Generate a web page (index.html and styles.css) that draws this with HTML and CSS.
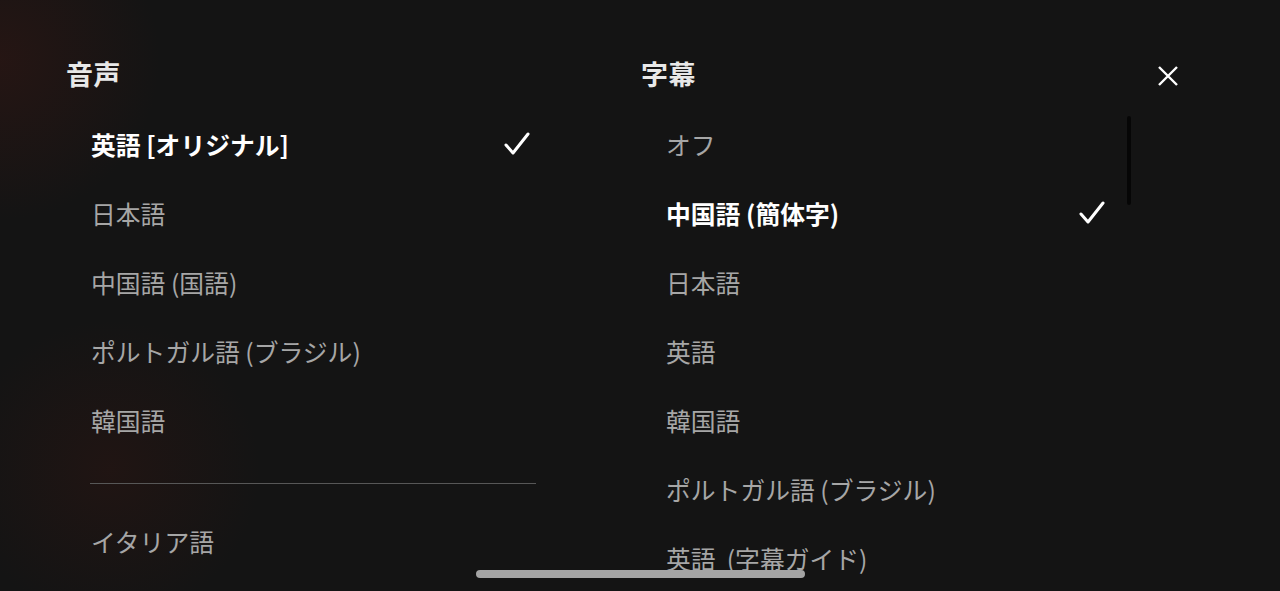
FILE: index.html
```html
<!DOCTYPE html>
<html lang="ja">
<head>
	<meta charset="UTF-8">
	<meta name="viewport" content="width=device-width, initial-scale=1.0">
	<title>音声と字幕</title>
	<link rel="stylesheet" href="styles.css">
</head>
<body>
	<div class="menu">
		<section class="col audio">
			<h2 class="col-title">音声</h2>
			<ul class="opts">
				<li class="opt selected">英語 [オリジナル]
					<svg class="check" viewBox="0 0 26 24"><polyline points="2,13 9,21 24,2"/></svg>
				</li>
				<li class="opt">日本語</li>
				<li class="opt">中国語 (国語)</li>
				<li class="opt">ポルトガル語 (ブラジル)</li>
				<li class="opt">韓国語</li>
			</ul>
			<div class="divider"></div>
			<ul class="opts">
				<li class="opt">イタリア語</li>
			</ul>
		</section>

		<section class="col subs">
			<div class="col-head">
				<h2 class="col-title">字幕</h2>
				<button class="close" aria-label="閉じる">
					<svg viewBox="0 0 24 24"><path d="M3 3 L21 21 M21 3 L3 21"/></svg>
				</button>
			</div>
			<ul class="opts">
				<li class="opt">オフ</li>
				<li class="opt selected">中国語 (簡体字)
					<svg class="check" viewBox="0 0 26 24"><polyline points="2,13 9,21 24,2"/></svg>
				</li>
				<li class="opt">日本語</li>
				<li class="opt">英語</li>
				<li class="opt">韓国語</li>
				<li class="opt">ポルトガル語 (ブラジル)</li>
				<li class="opt">英語&nbsp; (字幕ガイド)</li>
			</ul>
			<div class="scroll-thumb"></div>
		</section>
	</div>

	<div class="home-bar"></div>
</body>
</html>
```

FILE: styles.css
```css
*,
*::before,
*::after {
	box-sizing: border-box;
}

html, body {
	margin: 0;
	height: 100%;
	overflow: hidden;
}

body {
	font-family: "Noto Sans CJK JP", "Noto Sans", sans-serif;
	color: #a6a6a6;
	background-color: #141414;
	background-image:
		radial-gradient(circle at 0 60px, rgba(70, 24, 18, 0.35) 0, rgba(20, 20, 20, 0) 160px),
		radial-gradient(circle at 110px 470px, rgba(60, 22, 16, 0.3) 0, rgba(20, 20, 20, 0) 150px);
}

.menu {
	display: flex;
	padding: 57px 0 0 66px;
}

.col {
	position: relative;
}

.audio {
	width: 575px;
}

.subs {
	width: 539px;
}

.col-head {
	display: flex;
	justify-content: space-between;
	align-items: center;
}

.col-title {
	margin: 0 0 18px;
	height: 34px;
	line-height: 34px;
	font-size: 27px;
	font-weight: 700;
	color: #e8e8e8;
	letter-spacing: 0.5px;
}

.close {
	margin: 4px 0 18px;
	padding: 0;
	width: 24px;
	height: 24px;
	border: 0;
	background: none;
	cursor: pointer;
}

.close svg {
	display: block;
	width: 24px;
	height: 24px;
	fill: none;
	stroke: #fff;
	stroke-width: 2.4;
}

.opts {
	list-style: none;
	margin: 0 0 0 24px;
	padding: 0;
	width: 446px;
}

.opt {
	display: flex;
	align-items: center;
	justify-content: space-between;
	height: 69px;
	padding: 0 6px 0 1px;
	font-size: 24.8px;
}

.opt.selected {
	color: #fff;
	font-weight: 700;
}

.check {
	width: 26px;
	height: 24px;
	fill: none;
	stroke: #fff;
	stroke-width: 3;
	stroke-linecap: round;
	stroke-linejoin: round;
}

.divider {
	margin: 29px 0 22px 24px;
	width: 446px;
	height: 1px;
	background: #575757;
}

.scroll-thumb {
	position: absolute;
	top: 59px;
	left: 486px;
	width: 4px;
	height: 89px;
	border-radius: 2px;
	background: #060606;
}

.home-bar {
	position: fixed;
	left: 50%;
	bottom: 13px;
	width: 329px;
	height: 8px;
	margin-left: -164px;
	border-radius: 4px;
	background: #a4a4a4;
}
```
